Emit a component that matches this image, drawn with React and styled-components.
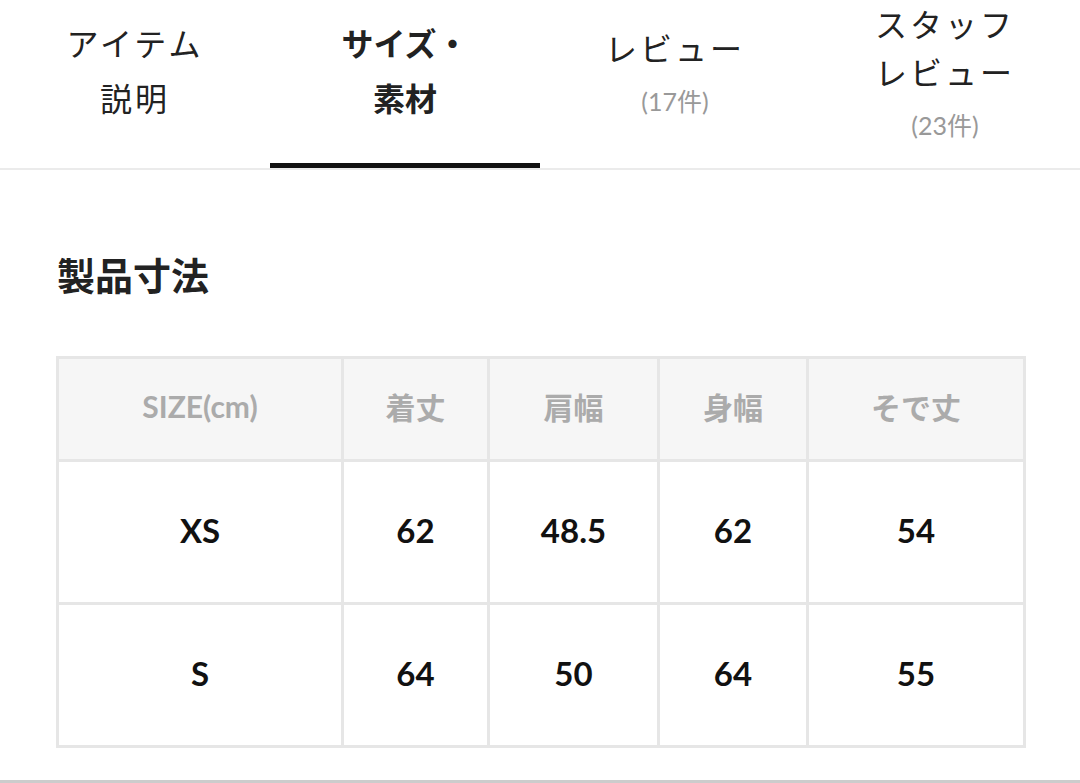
import React from "react";
import styled, { createGlobalStyle } from "styled-components";

const GlobalStyle = createGlobalStyle`
    body {
        margin: 0;
        background: #ffffff;
        font-family: Lato, "Noto Sans CJK JP", sans-serif;
        color: #222;
    }
`;

const tabs = [
    { lines: ["アイテム", "説明"], lh: 55 },
    { lines: ["サイズ・", "素材"], lh: 55, active: true },
    { lines: ["レビュー"], count: "(17件)", lh: 48 },
    { lines: ["スタッフ", "レビュー"], count: "(23件)", lh: 48 },
];

const headers = ["SIZE(cm)", "着丈", "肩幅", "身幅", "そで丈"];
const widths = [285, 146, 170, 149, 217];
const rows = [
    ["XS", "62", "48.5", "62", "54"],
    ["S", "64", "50", "64", "55"],
];

export default function App() {
    return (
        <>
            <GlobalStyle />
            <TabBar>
                {tabs.map((tab, i) => (
                    <Tab key={i} $active={tab.active}>
                        {tab.lines.map((line) => (
                            <Label key={line} $lh={tab.lh} $active={tab.active}>{line}</Label>
                        ))}
                        {tab.count && <Count>{tab.count}</Count>}
                    </Tab>
                ))}
            </TabBar>

            <Section>
                <Heading>製品寸法</Heading>
                <SizeTable>
                    <colgroup>
                        {widths.map((w, i) => <col key={i} style={{ width: w }} />)}
                    </colgroup>
                    <thead>
                        <tr>
                            {headers.map((h) => <Th key={h}>{h}</Th>)}
                        </tr>
                    </thead>
                    <tbody>
                        {rows.map((row) => (
                            <tr key={row[0]}>
                                {row.map((cell, i) => <Td key={i}>{cell}</Td>)}
                            </tr>
                        ))}
                    </tbody>
                </SizeTable>
            </Section>
            <Divider />
        </>
    );
}

const TabBar = styled.nav`
    display: flex;
    border-bottom: 2px solid #ebebeb;
`

const Tab = styled.div`
    flex: 1;
    height: 168px;
    box-sizing: border-box;
    padding-bottom: 24px;
    border-bottom: 5px solid ${(p) => (p.$active ? "#111111" : "transparent")};
    display: flex;
    flex-direction: column;
    align-items: center;
    justify-content: center;
`

const Label = styled.div`
    font-family: "Noto Sans CJK JP", sans-serif;
    font-size: 32px;
    font-weight: ${(p) => (p.$active ? 700 : 400)};
    line-height: ${(p) => p.$lh}px;
    color: #222;
    letter-spacing: ${(p) => (p.$active ? "0" : "3px")};
`

const Count = styled.div`
    margin-top: 15px;
    font-family: Lato, "Noto Sans CJK JP", sans-serif;
    font-size: 25px;
    line-height: 30px;
    color: #999999;
`

const Section = styled.section`
    padding: 0 56px;
`

const Heading = styled.h2`
    margin: 81px 0 59px 1px;
    font-family: "Noto Sans CJK JP", sans-serif;
    font-size: 38px;
    font-weight: 700;
    line-height: 46px;
    color: #222;
`

const SizeTable = styled.table`
    width: 967px;
    table-layout: fixed;
    border-collapse: collapse;

    thead tr {
        height: 103px;
    }

    tbody tr {
        height: 143px;
    }
`

const Th = styled.th`
    border: 3px solid #e6e6e6;
    background: #f6f6f6;
    font-family: Lato, "Noto Sans CJK JP", sans-serif;
    font-size: 30px;
    font-weight: 700;
    color: #ababab;
    text-align: center;
    padding: 0 0 6px;
`

const Td = styled.td`
    border: 3px solid #e6e6e6;
    font-family: Lato, sans-serif;
    font-size: 33px;
    font-weight: 700;
    color: #111;
    text-align: center;
    padding: 0 0 5px;
`

const Divider = styled.div`
    margin-top: 32px;
    border-top: 3px solid #cccccc;
`
